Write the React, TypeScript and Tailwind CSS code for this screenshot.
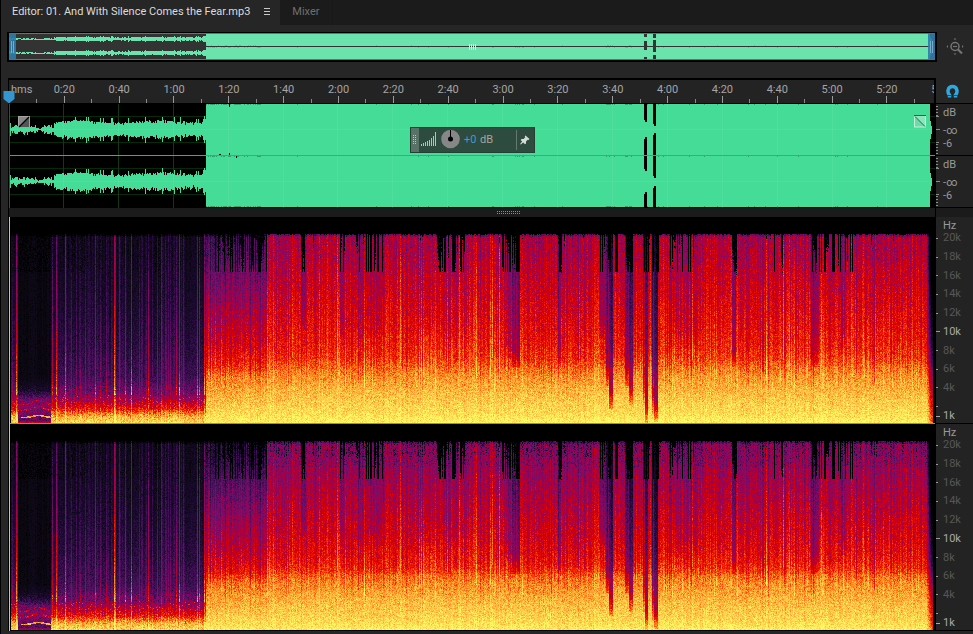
import { useEffect, useRef } from "react";

const WIDTH = 926;
const SPEC_HEIGHT = 206;
const WAVE_HEIGHT = 104;
const LOUD_START = 197;

type Point = [number, number];

const times = [
  "0:20", "0:40", "1:00", "1:20", "1:40", "2:00", "2:20", "2:40", "3:00",
  "3:20", "3:40", "4:00", "4:20", "4:40", "5:00", "5:20", "5:40",
];

const frequencies = ["20k", "18k", "16k", "14k", "12k", "10k", "8k", "6k", "4k", ""];

const palette: [number, number, number, number][] = [
  [0, 0, 0, 0],
  [0.14, 13, 9, 20],
  [0.24, 28, 10, 50],
  [0.36, 72, 16, 92],
  [0.47, 128, 10, 104],
  [0.56, 170, 0, 64],
  [0.64, 214, 0, 8],
  [0.72, 244, 32, 0],
  [0.8, 255, 118, 20],
  [0.88, 255, 184, 62],
  [1, 255, 250, 100],
];

// level by frequency in kHz
const loudLevels: Point[] = [
  [0, 1], [1, 0.95], [3, 0.9], [5, 0.83], [6, 0.78], [7, 0.72], [8, 0.695],
  [10, 0.665], [14, 0.62], [18, 0.575], [22, 0.55],
];
const buildLevels: Point[] = [
  [0, 1], [1, 0.95], [3, 0.88], [5, 0.81], [6, 0.72],
  [8, 0.64], [11, 0.57], [14, 0.49], [16, 0.44], [18, 0.38], [22, 0.33],
];
const quietLevels: Point[] = [
  [0, 0.94], [0.7, 0.87], [1.1, 0.78], [1.6, 0.66], [2.3, 0.57],
  [3.2, 0.43], [5, 0.33], [8, 0.27], [13, 0.21], [18, 0.17], [22, 0.16],
];
const introLevels: Point[] = [
  [0, 0.7], [0.3, 0.38], [1, 0.44], [1.8, 0.5], [2.6, 0.42], [3.6, 0.22], [5, 0.13], [22, 0.12],
];

// [column, strength] of the transients in the quiet part
const transients: Point[] = [
  [3, 0.16], [7, 0.46], [8, 0.24], [43, 0.3], [47, 0.44], [48, 0.2], [56, 0.34],
  [62, 0.16], [67, 0.12], [71, 0.16], [76, 0.2], [86, 0.34], [91, 0.14], [97, 0.2],
  [105, 0.44], [106, 0.32], [110, 0.2], [116, 0.34], [122, 0.42], [130, 0.2],
  [137, 0.14], [139, 0.31], [148, 0.22], [152, 0.2], [157, 0.16], [161, 0.14],
  [167, 0.28], [170, 0.38], [174, 0.18], [188, 0.42], [190, 0.34], [195, 0.48], [196, 0.2],
];

// [from, to, share of columns that are cut above 16 kHz]
const gaps: [number, number, number][] = [
  [204, 214, 0.5], [214, 238, 0.65], [238, 258, 0.86], [292, 296, 1], [331, 336, 0.7],
  [347, 377, 0.55], [409, 418, 0.5], [428, 434, 0.9], [434, 456, 0.45], [493, 499, 0.8],
  [499, 511, 0.9], [549, 553, 1], [590, 596, 0.7], [598, 604, 0.9], [606, 609, 1],
  [617, 624, 1], [634, 640, 0.7], [643, 650, 0.8], [659, 690, 0.3],
  [723, 728, 1], [762, 775, 0.3], [802, 808, 0.9], [808, 832, 0.55], [836, 844, 0.3],
];

// [from, to, depth, lowest kHz]
const dips: [number, number, number, number][] = [
  [292, 297, 0.12, 10], [331, 335, 0.1, 9], [347, 375, 0.04, 9], [409, 450, 0.03, 9],
  [497, 502, 0.08, 7], [502, 511, 0.18, 6], [549, 552, 0.12, 6],
  [590, 597, 0.1, 9], [596, 600, 0.24, 4], [600, 604, 0.3, 1.5], [616, 620, 0.24, 4],
  [620, 624, 0.27, 2], [634, 636, 0.2, 2], [636, 639, 0.34, 0],
  [643, 645, 0.24, 1], [645, 649, 0.36, 0.2], [660, 690, 0.05, 8],
  [723, 727, 0.16, 6], [802, 810, 0.12, 6], [832, 836, 0.12, 8],
];

function createRandom(seed: number) {
  let s = seed;
  return () => {
    s = (s + 0x6d2b79f5) | 0;
    let t = Math.imul(s ^ (s >>> 15), 1 | s);
    t = (t + Math.imul(t ^ (t >>> 7), 61 | t)) ^ t;
    return ((t ^ (t >>> 14)) >>> 0) / 4294967296;
  };
}

function interpolate(points: Point[], at: number) {
  for (let i = 1; i < points.length; i++) {
    if (at <= points[i][0]) {
      const [x0, y0] = points[i - 1];
      const [x1, y1] = points[i];
      return y0 + ((y1 - y0) * (at - x0)) / (x1 - x0);
    }
  }
  return points[points.length - 1][1];
}

function toColor(value: number) {
  const v = Math.min(1, Math.max(0, value));
  let i = 1;
  while (i < palette.length - 1 && v > palette[i][0]) i++;
  const a = palette[i - 1];
  const b = palette[i];
  const t = (v - a[0]) / (b[0] - a[0]);
  return [a[1] + (b[1] - a[1]) * t, a[2] + (b[2] - a[2]) * t, a[3] + (b[3] - a[3]) * t];
}

function drawSpectrogram(ctx: CanvasRenderingContext2D, channel: number) {
  const column = createRandom(41);
  const noise = createRandom(97 + channel);
  const image = ctx.createImageData(WIDTH, SPEC_HEIGHT);
  const strengths = new Map(transients);

  for (let x = 0; x < WIDTH; x++) {
    const loud = x >= LOUD_START;
    const intro = x > 8 && x < 42;
    const build = loud && x < 258;
    const levels = build ? buildLevels : loud ? loudLevels : intro ? introLevels : quietLevels;

    let streak = (column() - 0.5) * (loud ? 0.1 : 0.06);
    const pick = column();
    const boost = column();
    if (loud && pick > 0.88) streak += (build ? 0.02 : 0.03) + boost * 0.07;
    if (loud && pick < 0.14) streak -= 0.05;
    if (!loud && !intro && x > 54 && x < 176 && pick > 0.6) streak += boost * 0.12;
    const transient = strengths.get(x) ?? 0;
    const peak = 5 + column() * 12;
    const floor = 3.5 + column() * 3.5;

    const gap = gaps.find(([from, to]) => x >= from && x < to);
    const gapPick = column();
    const depth = column();
    const stray = column() < 0.06 ? 19 + depth * 2.5 : 30;
    const cut = gap && gapPick < gap[2] ? (depth < 0.5 ? 16.2 : 16.2 + (depth - 0.5) * 8) : stray;
    const dip = dips.find(([from, to]) => x >= from && x < to);
    const top = 17 + (column() > 0.6 ? 1 : 0);

    for (let y = 0; y < SPEC_HEIGHT; y++) {
      const khz = (206 - y) / 9.37;
      let v = 0;
      if (x >= 2 && x < 924 && y >= top) {
        v = interpolate(levels, khz);
        v += streak * (khz < floor ? (loud ? 0.3 : 0.5) : 1);
        if (!loud) {
          const lift = khz < 3 ? 0.15 + khz * 0.12 : khz < peak ? 1 : 0.85;
          v += transient * lift * (1 - khz / 60);
        }
        if (loud && khz > floor && khz < peak + 2 && boost > 0.6) v += 0.035;
        if (dip && khz > dip[3]) v -= dip[2] * Math.min(1, (khz - dip[3]) / 3 + 0.3);
        if (channel === 1 && loud) v -= khz > 6 ? 0.03 + (khz - 6) * 0.003 : 0.01;

        const n = noise() + noise() - 1;
        v += n * (loud ? 0.1 : khz < 4 ? 0.13 : intro ? 0.035 : 0.07);
        if (!loud && khz > 4 && noise() < 0.1) v -= 0.08;

        // gated highs
        const edge = cut + (noise() - 0.5) * (cut > 16.3 ? 1.6 : 0);
        if (khz > edge && v < 0.8) v = noise() < 0.08 ? 0.22 : 0.02;
        if (!loud && khz > 16.2 && (intro || boost < 0.25) && noise() < 0.5) v -= 0.1;
        if (loud && khz > 17.5 && noise() < (channel ? 0.16 : 0.06)) v -= 0.12;
        if (channel === 1 && loud && khz > 18.5 && boost < 0.3 && noise() < 0.35) v -= 0.25;
        if (y < top + 2) v -= 0.12;

        // melody and its overtones
        if (x > 8 && x < 44) {
          const rise = 2 * Math.exp(-((x - 29) ** 2) / 60);
          if (x > 11 && Math.abs(y - (200 - rise)) < 0.8) v = 0.86 + n * 0.1;
          if (Math.abs(y - (193 - rise * 2)) < 0.9 && noise() < 0.55) v = 0.68 + n * 0.1;
          if (Math.abs(y - (187 - rise * 2)) < 0.9 && noise() < 0.4) v = 0.64 + n * 0.1;
        } else if (!loud && khz > 1.5 && khz < 3 && noise() < 0.03) {
          v = 0.75;
        }
        if (x > 917) v -= (x - 917) * (0.035 + khz * 0.005);
      }
      const [r, g, b] = toColor(v);
      const i = (y * WIDTH + x) * 4;
      image.data[i] = r;
      image.data[i + 1] = g;
      image.data[i + 2] = b;
      image.data[i + 3] = 255;
    }
  }
  ctx.putImageData(image, 0, 0);
}

function envelope(x: number, random: number) {
  if (x < 2) return 6;
  if (x < 5) return 1 + random * 2;
  if (x < 9) return 3 + random * 3;
  if (x < 28) return 1.5 + random * 2.5;
  if (x < 34) return 0.5 + random;
  if (x < 43) return 1.5 + random * 2.5;
  if (x < 45) return 1;
  if (x >= 194) return 8 + random * 5;
  const swell = 6 + Math.sin(x / 13 - 3.6) * 1.1;
  return swell + random * 2 + (random > 0.93 ? 3.4 : 0) - (random < 0.15 ? 1 : 0);
}

// Both channels, stacked; a lower height shrinks the lanes.
function drawWaveform(
  ctx: CanvasRenderingContext2D,
  height: number,
  colors: { back: string; wave: string; middle: string },
  grid: boolean,
) {
  const lane = height / 2;
  const scale = height / WAVE_HEIGHT;
  const random = createRandom(12);
  ctx.fillStyle = colors.back;
  ctx.fillRect(0, 0, WIDTH, height);

  if (grid) {
    ctx.fillStyle = "#052c05";
    for (let i = 1; i < 17; i++) ctx.fillRect(Math.round(i * 54.9) - 1, 0, 1, height);
    for (const y of [12, 38, 64, 90]) ctx.fillRect(0, y, WIDTH, 1);
  }

  ctx.fillStyle = colors.wave;
  for (let x = 0; x < LOUD_START; x++) {
    const level = envelope(x, random());
    for (const mid of [Math.floor(lane / 2) - (grid ? 1 : 0), Math.floor(lane * 1.5) - (grid ? 1 : 0)]) {
      const up = Math.round((level + random() - 0.5) * scale);
      const down = Math.round((level + random() * 2 - 1) * scale);
      ctx.fillRect(x, mid - up, 1, up + down + (grid ? 1 : 0) || 1);
    }
  }
  ctx.fillRect(LOUD_START, 0, 921 - LOUD_START, height - (grid ? 1 : 0));
  for (const mid of [lane / 2, lane * 1.5]) {
    ctx.fillRect(921, mid - 9 * scale, 1, 18 * scale);
    ctx.fillRect(922, mid - 4 * scale, 1, 8 * scale);
  }

  ctx.fillStyle = colors.back;
  const breaks: [number, number, number][] = grid
    ? [
        [635, 0, 18], [635, 33, 34], [635, 88, 16], [644, 0, 22], [644, 29, 45], [644, 82, 22],
      ]
    : [[635, 0, 4], [635, 8, 9], [635, 24, 3], [644, 0, 5], [644, 7, 12], [644, 22, 5]];
  for (const [x, y, h] of breaks) {
    ctx.fillRect(x, y, 3, h);
    if (!grid) continue;
    // the edges taper towards the signal
    ctx.fillStyle = colors.wave;
    if (y > 0) ctx.fillRect(x, y, 1, 2);
    if (y + h < height) ctx.fillRect(x, y + h - 2, 1, 2);
    ctx.fillStyle = colors.back;
  }

  // clipped peaks
  ctx.fillStyle = "rgba(0,60,30,0.35)";
  for (let x = LOUD_START; x < 921; x++) {
    const busy = x < 252 || (x > 505 && x < 515) || (x > 596 && x < 604) || (x > 615 && x < 623);
    if (random() < (busy ? 0.6 : 0.03)) {
      ctx.fillRect(x, lane - (random() < 0.3 ? 1 : 0), 1, 1);
      if (grid) {
        ctx.fillRect(x, 0, 1, 1);
        ctx.fillRect(x, height - 2, 1, 1);
      }
    }
  }
  if (grid) {
    ctx.fillStyle = "#000000";
    ctx.fillRect(220, 0, 1, 3);
    ctx.fillRect(220, 49, 1, 2);
    ctx.fillRect(210, 50, 2, 1);
    ctx.fillRect(227, 51, 1, 3);
    ctx.fillStyle = "rgba(255,255,255,0.06)";
    for (let i = 1; i < 17; i++) ctx.fillRect(Math.round(i * 54.9) - 1, 0, 1, height);
    for (const y of [25, 77]) ctx.fillRect(0, y, 921, 1);
  }
  ctx.fillStyle = colors.middle;
  ctx.fillRect(grid ? 0 : LOUD_START, Math.floor(lane) - (grid ? 1 : 0), WIDTH, 1);
}

function Plot({
  height,
  className,
  label,
  draw,
}: {
  height: number;
  className: string;
  label: string;
  draw: (ctx: CanvasRenderingContext2D) => void;
}) {
  const ref = useRef<HTMLCanvasElement>(null);

  useEffect(() => {
    const ctx = ref.current?.getContext("2d");
    if (ctx) draw(ctx);
  }, [draw]);

  return (
    <canvas
      ref={ref}
      width={WIDTH}
      height={height}
      role="img"
      aria-label={label}
      className={`block w-full ${className}`}
    />
  );
}

const drawOverview = (ctx: CanvasRenderingContext2D) =>
  drawWaveform(ctx, 27, { back: "#333333", wave: "#6ae3ac", middle: "#333333" }, false);
const drawMainWave = (ctx: CanvasRenderingContext2D) =>
  drawWaveform(ctx, WAVE_HEIGHT, { back: "#000000", wave: "#45dc98", middle: "#7c8a83" }, true);
const drawLeft = (ctx: CanvasRenderingContext2D) => drawSpectrogram(ctx, 0);
const drawRight = (ctx: CanvasRenderingContext2D) => drawSpectrogram(ctx, 1);

function Tabs() {
  return (
    <div className="flex h-[25px] bg-[#1b1b1b]">
      <div className="flex items-center gap-3.5 border-l border-black bg-[#262626] pr-2.5 pb-0.5 pl-[11px]">
        <button className="text-[11px] leading-4 whitespace-nowrap text-[#dcdcdc]">
          Editor: 01. And With Silence Comes the Fear.mp3
        </button>
        <button aria-label="Panel menu">
          <svg width="6" height="7" viewBox="0 0 6 7" fill="#c8c8c8">
            <path d="M0 0h6v1H0zM0 3h6v1H0zM0 6h6v1H0z" />
          </svg>
        </button>
      </div>
      <button className="border-r border-[#181818] px-3 pb-0.5 text-[11px] leading-4 text-[#6f6f6f]">
        Mixer
      </button>
    </div>
  );
}

function Overview() {
  return (
    <div className="flex items-center pt-[7px] pl-1.5">
      <div className="relative h-[30px] flex-1 border-x-2 border-t border-b-2 border-black">
        <Plot height={27} className="h-[27px]" label="Overview" draw={drawOverview} />
        <div className="absolute inset-0 border-y border-[#2f87a8]" />
        <div className="absolute inset-y-0 left-0 flex w-[7px] items-center justify-center gap-px bg-[#2d7ba8]/90">
          <i className="h-3 w-px bg-[#75aecb]" />
          <i className="h-3 w-px bg-[#75aecb]" />
        </div>
        <div className="absolute inset-y-0 right-0 flex w-[7px] items-center justify-center gap-px bg-[#2d7ba8]/90">
          <i className="h-3 w-px bg-[#75aecb]" />
          <i className="h-3 w-px bg-[#75aecb]" />
        </div>
        <div className="absolute inset-0 flex items-center justify-center gap-px">
          <i className="h-1.5 w-px bg-[#c8f5df]" />
          <i className="h-1.5 w-px bg-[#c8f5df]" />
          <i className="h-1.5 w-px bg-[#c8f5df]" />
          <i className="h-1.5 w-px bg-[#c8f5df]" />
        </div>
      </div>
      <button aria-label="Zoom out full" className="flex w-9 justify-center">
        <svg width="18" height="18" viewBox="0 0 18 18" fill="none" stroke="#747474">
          <circle cx="9" cy="8.5" r="4" strokeWidth="1.5" />
          <path d="M7 8.5h4" strokeWidth="1.2" />
          <path d="M12 11.5l4 4" strokeWidth="2.2" />
          <path
            d="M9 0l1.500 1.500h-3zM9 17l1.500-1.500h-3zM0.500 8.500l1.500-1.500v3zM17.500 8.500l-1.500-1.500v3z"
            fill="#747474"
            stroke="none"
          />
        </svg>
      </button>
    </div>
  );
}

function Ruler() {
  return (
    <div className="relative flex h-[26px] border-t-2 border-r border-b border-black bg-[#232323] text-[11px] text-[#a5a5a5]">
      <div className="flex min-w-0 flex-1 overflow-hidden">
        <div className="w-[2.96%] shrink-0 pl-0.5 leading-5">hms</div>
        {times.map((time) => (
          <div key={time} className="flex w-[5.93%] shrink-0 items-end">
            <i className="h-1 w-px bg-[#8a8a8a]" />
            <div className="flex h-full flex-1 flex-col items-center justify-between">
              <span className="h-4 leading-5">{time}</span>
              <i className="h-[7px] w-px bg-[#9a9a9a]" />
            </div>
          </div>
        ))}
      </div>
      <svg className="absolute top-[11px] -left-[6px]" width="12" height="13" viewBox="0 0 12 13">
        <path d="M0.500 0h11v8L6 12.500 0.500 8z" fill="#3595cf" />
      </svg>
    </div>
  );
}

function Grip({ columns, rows, color }: { columns: number; rows: number; color: string }) {
  return (
    <svg width={columns * 2} height={rows * 2} viewBox={`0 0 ${columns * 2} ${rows * 2}`} fill={color}>
      {Array.from({ length: columns * rows }, (_, i) => (
        <rect key={i} x={(i % columns) * 2} y={Math.floor(i / columns) * 2} width="1" height="1" />
      ))}
    </svg>
  );
}

function VolumeHud() {
  return (
    <div className="absolute top-[23px] left-[43.3%] flex h-[26px] w-[125px] items-center border border-[#253d32] bg-[#2d4b3e] text-[11px] leading-4">
      <div className="flex h-full w-2 items-center justify-center bg-[#587267]">
        <Grip columns={2} rows={5} color="#b9c8c0" />
      </div>
      <svg className="mb-1 ml-0.5" width="16" height="15" viewBox="0 0 16 15" fill="#b5c2bb">
        {[2, 3, 4, 5, 6, 8, 10, 14].map((h, i) => (
          <rect key={i} x={i * 2} y={15 - h} width="1" height={h} />
        ))}
      </svg>
      <button aria-label="Adjust amplitude" className="mb-0.5 ml-1">
        <svg width="19" height="20" viewBox="0 0 19 20">
          <circle cx="9.500" cy="10" r="9.300" fill="#878787" />
          <circle cx="9.500" cy="10" r="2.500" fill="#000" />
          <path d="M9.500 10V1" stroke="#000" />
        </svg>
      </button>
      <input
        id="gain"
        defaultValue="+0"
        className="ml-1 w-4 bg-transparent text-[#3d9bd0] outline-none"
      />
      <label htmlFor="gain" className="flex-1 text-[#aaa69b]">dB</label>
      <button aria-label="Pin" className="flex h-5 w-[18px] items-center justify-center border-l border-[#64796f]">
        <svg width="10" height="10" viewBox="0 0 10 10" fill="#d3dcd7">
          <path d="M5.500 0.500l4 3.500-1 1-0.800-0.200-1.700 1.700v2l-1 0.800-1.800-1.800L0.800 9.600l-0.700-0.500 2-2.500L0.700 4.900l0.800-0.900h2L5.300 2.300 4.700 1.300z" />
        </svg>
      </button>
    </div>
  );
}

function DecibelScale() {
  return (
    <div className="flex h-[52px] border-b border-black">
      <svg width="5" height="51" viewBox="0 0 5 51" fill="#8b8b8b">
        {[2, 5, 8, 11, 40, 43, 46, 49].map((y) => (
          <rect key={y} x="0" y={y} width="2" height="1" />
        ))}
        {[12, 25, 38].map((y) => (
          <rect key={y} x="0" y={y} width={y === 25 ? 4 : 3} height="1" />
        ))}
      </svg>
      <div className="pt-px pl-0.5 text-[11px] leading-4 text-[#999999]">
        <div className="h-[18px]">dB</div>
        <div className="h-[13px]">-∞</div>
        <div className="h-4">-6</div>
      </div>
    </div>
  );
}

function FrequencyScale() {
  return (
    <div className="h-[207px] border-b border-black pt-px text-[11px] text-[#575757]">
      <div className="h-[11px] pl-[7px] leading-4 text-[#999999]">Hz</div>
      <div className="flex h-[187px] flex-col">
        {frequencies.map((label) => (
          <div
            key={label}
            className={`flex flex-1 items-center leading-4 ${label === "10k" ? "gap-[3px] text-[#a8a8a8]" : "gap-[5px]"}`}
          >
            <i className={`h-px bg-[#999999] ${label === "10k" ? "w-1" : "w-0.5"}`} />
            {label}
          </div>
        ))}
      </div>
      <div className="flex h-px items-center gap-[3px] text-[#a8a8a8]">
        <i className="h-px w-1 bg-[#a8a8a8]" />
        1k
      </div>
    </div>
  );
}

export default function App() {
  return (
    <main className="min-h-screen bg-[#262626] font-[Roboto,'Noto_Sans',sans-serif]">
      <Tabs />
      <div className="border-l border-black pb-1">
        <Overview />
        <div className="mt-4 flex pl-[7px]">
          <div className="min-w-0 flex-1 border-l border-black">
            <Ruler />
            <div className="relative">
              <Plot height={WAVE_HEIGHT} className="h-[104px]" label="Waveform" draw={drawMainWave} />
              <div className="absolute inset-y-0 left-0 w-px bg-[#c01414]" />
              <svg className="absolute top-3 left-[9px]" width="12" height="12" viewBox="0 0 12 12">
                <rect x="0.500" y="0.500" width="11" height="11" fill="#555" stroke="#a5a5a5" />
                <path d="M1 11V1h10z" fill="#888" />
                <path d="M1 11L11 1" stroke="#000" strokeWidth="1.2" />
              </svg>
              <svg className="absolute top-[11px] right-[9px]" width="12" height="13" viewBox="0 0 12 13">
                <rect x="0.500" y="1" width="11" height="11" fill="#6fd9a8" stroke="#c3f2dc" />
                <path d="M1 1.500h10v10z" fill="#8ce5bb" />
                <path d="M0 0.500h12" stroke="#1d6b47" />
                <path d="M1 1.500l10 10" stroke="#1d6b47" />
              </svg>
              <VolumeHud />
            </div>
            <div className="flex h-[9px] items-center justify-center bg-[#1b1b1b] pl-[74px]">
              <Grip columns={12} rows={2} color="#8b8b8b" />
            </div>
            <div className="relative">
              <Plot
                height={SPEC_HEIGHT}
                className="box-content h-[206px] border-b border-[#8c8c8c]"
                label="Left channel spectrum"
                draw={drawLeft}
              />
              <Plot
                height={SPEC_HEIGHT}
                className="box-content h-[206px] border-b border-black"
                label="Right channel spectrum"
                draw={drawRight}
              />
              <div className="absolute inset-y-0 left-0 w-px bg-[#e3b4b4]" />
            </div>
          </div>
          <div className="flex w-[38px] shrink-0 flex-col border-l border-black bg-[#232323]">
            <div className="flex h-[26px] items-center border-b border-black bg-[#262626] pl-2.5">
              <button aria-label="Toggle snapping">
                <svg width="13" height="14" viewBox="0 0 13 14" fill="none">
                  <path
                    d="M3.500 13.500V11C1 8.500 1.500 2.500 6.500 2.500S12 8.500 9.500 11v2.500"
                    stroke="#2fa8df"
                    strokeWidth="3.500"
                  />
                  <path d="M1.500 11.500h4M7.500 11.500h4" stroke="#1c4f68" />
                </svg>
              </button>
            </div>
            <DecibelScale />
            <DecibelScale />
            <div className="h-[9px] bg-[#1b1b1b]" />
            <FrequencyScale />
            <FrequencyScale />
          </div>
        </div>
      </div>
    </main>
  );
}
